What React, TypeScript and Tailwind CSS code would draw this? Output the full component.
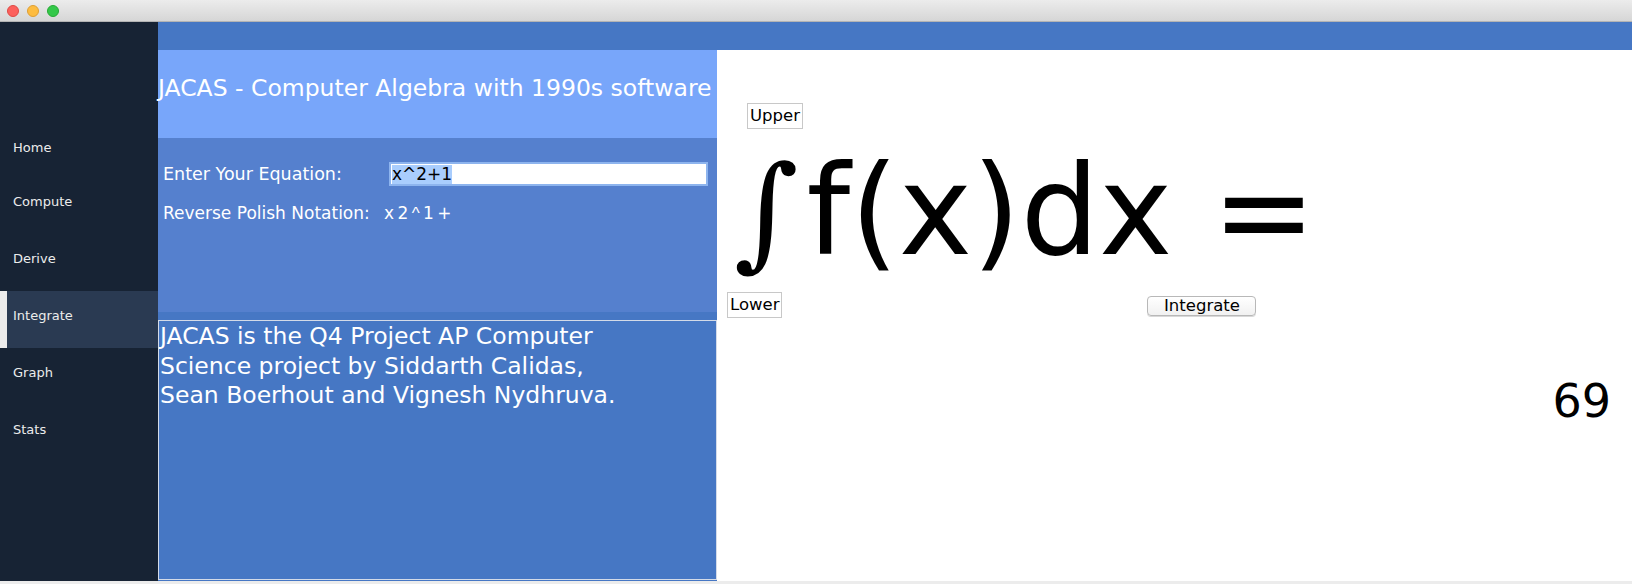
import React from 'react'

const navItems = ['Home', 'Compute', 'Derive', 'Integrate', 'Graph', 'Stats']

function TitleBar() {
  return (
    <div className="h-[22px] flex items-center gap-[8px] pl-[7px] bg-gradient-to-b from-[#ececec] to-[#d6d6d6] border-b border-[#b4b4b4]">
      <span className="w-[12px] h-[12px] rounded-full bg-[#fc605c] border border-[#de4a45]" />
      <span className="w-[12px] h-[12px] rounded-full bg-[#fdbc40] border border-[#de9f34]" />
      <span className="w-[12px] h-[12px] rounded-full bg-[#34c84a] border border-[#27aa35]" />
    </div>
  )
}

function Sidebar() {
  return (
    <div className="w-[158px] shrink-0 bg-[#172334] pt-[98px]">
      {navItems.map((item, i) => {
        const active = item === 'Integrate'
        return (
          <div
            key={item}
            className={
              active
                ? 'h-[57px] flex items-center pb-[8px] bg-[#2a3a52] border-l-[7px] border-[#ececec] pl-[6px] text-[13px] text-[#ececec]'
                : i === 0
                  ? 'h-[57px] flex items-center pt-[6px] pb-[8px] pl-[13px] text-[13px] text-[#ececec]'
                  : 'h-[57px] flex items-center pb-[8px] pl-[13px] text-[13px] text-[#ececec]'
            }
          >
            {item}
          </div>
        )
      })}
    </div>
  )
}

function LeftColumn() {
  return (
    <div className="w-[559px] shrink-0 flex flex-col">
      <div className="h-[88px] bg-[#78a6fa] pt-[24px] text-[23.5px] leading-[28px] text-white whitespace-nowrap">
        JACAS - Computer Algebra with 1990s software
      </div>
      <div className="h-[174px] bg-[#5580ce] pt-[24px] pl-[5px] text-[17.5px] text-white">
        <div className="flex items-center h-[24px]">
          <span className="w-[226px]">Enter Your Equation:</span>
          <div className="w-[319px] h-[24px] bg-white border-2 border-[#8db4ee] flex items-center pl-[1px] text-[17px] text-black">
            <span className="bg-[#a9cdfd] leading-[19px]">x^2+1</span>
          </div>
        </div>
        <div className="flex items-center h-[24px] mt-[16px] text-[17px]">
          <span className="w-[221px]">Reverse Polish Notation:</span>
          <span className="[word-spacing:-2px] whitespace-pre">
            x 2 <span className="font-['Liberation_Sans',sans-serif]">^</span> 1 +
          </span>
        </div>
      </div>
      <div className="flex-1 bg-[#4677c4] pt-[8px] pb-[1px] flex flex-col">
        <div className="flex-1 border border-[#d4dbe8] pt-[1px] pl-[1px] text-[23.5px] leading-[29.5px] text-white">
          JACAS is the Q4 Project AP Computer
          <br />
          Science project by Siddarth Calidas,
          <br />
          Sean Boerhout and Vignesh Nydhruva.
        </div>
      </div>
    </div>
  )
}

function IntegralPanel() {
  return (
    <div className="flex-1 bg-white flex flex-col text-black">
      <div className="mt-[53px] ml-[30px] self-start h-[26px] px-[2px] border border-[#c8c8c8] flex items-center text-[16.5px]">
        Upper
      </div>
      <div className="mt-[20px] ml-[17px] flex items-baseline leading-none whitespace-nowrap">
        <span className="text-[124px] font-['DejaVu_Serif'] italic">∫</span>
        <span className="text-[124px] ml-[8px]">f(x)dx =</span>
      </div>
      <div className="mt-[19px] flex items-start">
        <div className="ml-[10px] h-[26px] px-[2px] border border-[#c8c8c8] flex items-center text-[16.5px]">
          Lower
        </div>
        <button className="ml-[365px] mt-[4px] w-[109px] h-[20px] rounded-[4px] border border-[#b8b8b8] bg-gradient-to-b from-white to-[#f1f1f1] flex items-center justify-center text-[16.5px] leading-none shadow-[0_1px_0_#d8d8d8]">
          Integrate
        </button>
      </div>
      <div className="mt-[60px] self-end mr-[21px] text-[46px] leading-none">69</div>
    </div>
  )
}

export default function App() {
  return (
    <div className="w-[1632px] h-[584px] flex flex-col bg-[#ececec] font-['DejaVu_Sans',sans-serif] overflow-hidden">
      <TitleBar />
      <div className="h-[559px] flex">
        <Sidebar />
        <div className="flex-1 flex flex-col">
          <div className="h-[28px] bg-[#4677c4]" />
          <div className="flex-1 flex">
            <LeftColumn />
            <IntegralPanel />
          </div>
        </div>
      </div>
    </div>
  )
}
